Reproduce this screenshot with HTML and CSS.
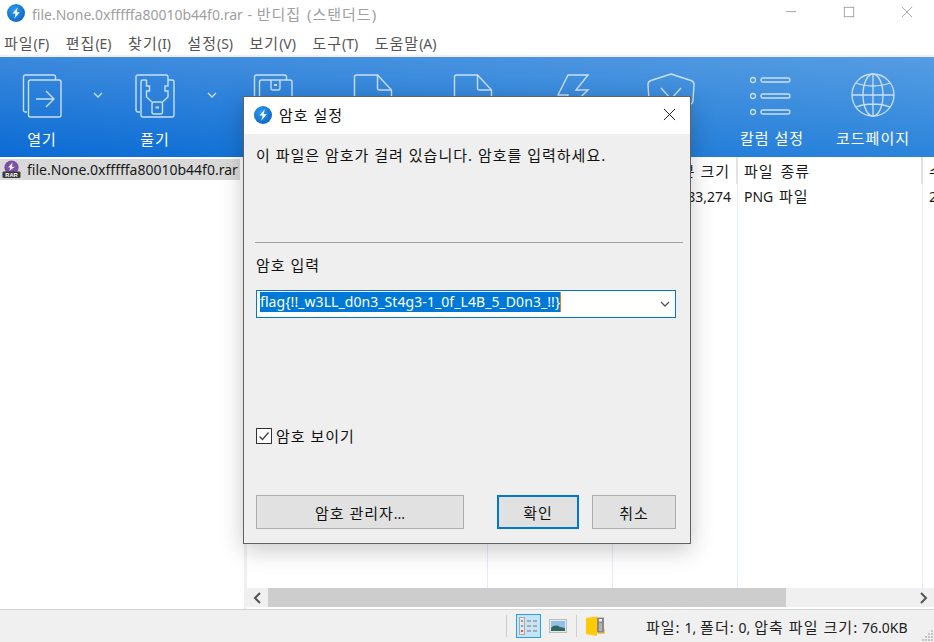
FILE: index.html
```html
<!DOCTYPE html>
<html lang="ko">
<head>
<meta charset="utf-8">
<title>반디집</title>
<link rel="stylesheet" href="styles.css">
</head>
<body>
<svg class="defs" width="0" height="0" aria-hidden="true">
  <defs>
    <radialGradient id="logoFill" cx="0.4" cy="0.35" r="0.75">
      <stop offset="0" stop-color="#2e9bee"/>
      <stop offset="1" stop-color="#0a62c4"/>
    </radialGradient>
    <symbol id="logo" viewBox="0 0 18 18">
      <circle cx="9" cy="9" r="9" fill="url(#logoFill)"/>
      <path d="M10.800 3.200 5.600 9.600h3l-1.300 5.200 5.400-6.600H9.600z" fill="#fff"/>
    </symbol>
    <symbol id="chev" viewBox="0 0 10 6">
      <path d="M1 1l4 4 4-4" fill="none" stroke="currentColor" stroke-width="1.300"/>
    </symbol>
    <symbol id="doc" viewBox="0 0 40 46">
      <path d="M1.500 4a2 2 0 0 1 2-2h21l14 15v25a2 2 0 0 1-2 2h-33a2 2 0 0 1-2-2z" fill="none" stroke="currentColor" stroke-width="1.400"/>
      <path d="M24.500 2v13a2 2 0 0 0 2 2h12" fill="none" stroke="currentColor" stroke-width="1.400"/>
    </symbol>
  </defs>
</svg>

<div class="app">
  <header class="titlebar">
    <svg class="logo"><use href="#logo"/></svg>
    <span class="title-text">file.None.0xfffffa80010b44f0.rar - <span class="ko">반디집 (스탠더드)</span></span>
    <div class="winbtns">
      <svg class="winbtn" viewBox="0 0 14 14"><path d="M1 6.500h12" stroke="#999" fill="none"/></svg>
      <svg class="winbtn" viewBox="0 0 14 14"><rect x="1.500" y="1.500" width="11" height="11" stroke="#999" fill="none"/></svg>
      <svg class="winbtn" viewBox="0 0 14 14"><path d="M1 1l12 12M13 1 1 13" stroke="#999" fill="none"/></svg>
    </div>
  </header>

  <nav class="menubar">
    <span><span class="ko">파일</span>(F)</span><span><span class="ko">편집</span>(E)</span><span><span class="ko">찾기</span>(I)</span><span><span class="ko">설정</span>(S)</span><span><span class="ko">보기</span>(V)</span><span><span class="ko">도구</span>(T)</span><span><span class="ko">도움말</span>(A)</span>
  </nav>

  <section class="toolbar">
    <div class="tool">
      <svg class="tool-icon" viewBox="0 0 40 46">
        <path d="M5 39H3.500a2 2 0 0 1-2-2V4a2 2 0 0 1 2-2h28a2 2 0 0 1 2 2v3" fill="none" stroke="currentColor" stroke-width="1.400"/>
        <rect x="6.500" y="7" width="32.500" height="37" rx="2" fill="none" stroke="currentColor" stroke-width="1.400"/>
        <path d="M14 26h17M24 18l8 8-8 8" fill="none" stroke="currentColor" stroke-width="1.400"/>
      </svg>
      <span class="tool-label ko">열기</span>
    </div>
    <svg class="tool-chev"><use href="#chev"/></svg>
    <div class="tool">
      <svg class="tool-icon" viewBox="0 0 40 46">
        <path d="M5 39H3a2 2 0 0 1-2-2V4a2 2 0 0 1 2-2h28a2 2 0 0 1 2 2v3" fill="none" stroke="currentColor" stroke-width="1.400"/>
        <path d="M11.500 7H8a2 2 0 0 0-2 2v33a2 2 0 0 0 2 2h29a2 2 0 0 0 2-2V9a2 2 0 0 0-2-2h-4" fill="none" stroke="currentColor" stroke-width="1.400"/>
        <path d="M11.500 7v6h3v5h-3v6l5.500 5M33 7v6h-3v5h3v6l-5.500 5" fill="none" stroke="currentColor" stroke-width="1.400"/>
        <rect x="17" y="29" width="10.500" height="12" rx="2" fill="none" stroke="currentColor" stroke-width="1.400"/>
        <rect x="20.500" y="33.500" width="3.500" height="2" fill="currentColor"/>
      </svg>
      <span class="tool-label ko">풀기</span>
    </div>
    <svg class="tool-chev"><use href="#chev"/></svg>
    <div class="tool">
      <svg class="tool-icon" viewBox="0 0 40 46">
        <path d="M5 39H3.500a2 2 0 0 1-2-2V4a2 2 0 0 1 2-2h28a2 2 0 0 1 2 2v3" fill="none" stroke="currentColor" stroke-width="1.400"/>
        <rect x="6.500" y="7" width="32.500" height="37" rx="2" fill="none" stroke="currentColor" stroke-width="1.400"/>
        <path d="M18 7v8a2 2 0 0 0 2 2h5a2 2 0 0 0 2-2V7" fill="none" stroke="currentColor" stroke-width="1.400"/>
        <rect x="21" y="11" width="3" height="2" fill="currentColor"/>
      </svg>
    </div>
    <div class="tool"><svg class="tool-icon"><use href="#doc"/></svg></div>
    <div class="tool"><svg class="tool-icon"><use href="#doc"/></svg></div>
    <div class="tool">
      <svg class="tool-icon" viewBox="0 0 40 46">
        <path d="M16 2H36L24 17H36L8 44l8-22H6z" fill="none" stroke="currentColor" stroke-width="1.400"/>
      </svg>
    </div>
    <div class="tool">
      <svg class="tool-icon shield" viewBox="0 0 50 46">
        <path d="M25 1 45 7.500c2 .7 3 2 3 4l-1 16c0 2-1 3-2.500 4L25 45 5.500 31.500C4 30.500 3 29.500 3 27.500l-1-16c0-2 1-3.300 3-4z" fill="none" stroke="currentColor" stroke-width="1.400"/>
        <path d="M15 15l10 11 10-11" fill="none" stroke="currentColor" stroke-width="1.400"/>
      </svg>
    </div>
    <div class="tool">
      <svg class="tool-icon" viewBox="0 0 44 44">
        <circle cx="3" cy="7" r="2.500" fill="none" stroke="currentColor" stroke-width="1.300"/>
        <circle cx="3" cy="23" r="2.500" fill="none" stroke="currentColor" stroke-width="1.300"/>
        <circle cx="3" cy="39" r="2.500" fill="none" stroke="currentColor" stroke-width="1.300"/>
        <rect x="11" y="5" width="29" height="4" rx="2" fill="none" stroke="currentColor" stroke-width="1.300"/>
        <rect x="11" y="21" width="29" height="4" rx="2" fill="none" stroke="currentColor" stroke-width="1.300"/>
        <rect x="11" y="37" width="29" height="4" rx="2" fill="none" stroke="currentColor" stroke-width="1.300"/>
      </svg>
      <span class="tool-label ko">칼럼 설정</span>
    </div>
    <div class="tool">
      <svg class="tool-icon globe" viewBox="0 0 44 44">
        <circle cx="22" cy="22" r="21" fill="none" stroke="currentColor" stroke-width="1.300"/>
        <ellipse cx="22" cy="22" rx="10" ry="21" fill="none" stroke="currentColor" stroke-width="1.300"/>
        <path d="M22 1v42M1 22h42M5 10c10 4 24 4 34 0M5 34c10-4 24-4 34 0" fill="none" stroke="currentColor" stroke-width="1.300"/>
      </svg>
      <span class="tool-label ko">코드페이지</span>
    </div>
  </section>

  <main class="content">
    <aside class="tree">
      <div class="tree-row">
        <svg class="rar-icon" viewBox="0 0 20 20">
          <circle cx="10" cy="8" r="7.500" fill="#7d4ea8"/>
          <path d="M11 2.500 6.500 8H9L7.500 11.500 13.500 7H10.500z" fill="#fff"/>
          <rect x="0.500" y="12" width="19" height="7" rx="1.500" fill="#3a3a3a"/>
          <text x="10" y="18" class="rar-text" text-anchor="middle">RAR</text>
        </svg>
        <span>file.None.0xfffffa80010b44f0.rar</span>
      </div>
    </aside>
    <div class="splitter"></div>
    <div class="listpane">
      <div class="columns">
        <div class="col col-a"><div class="cell head"></div></div>
        <div class="col col-b"><div class="cell head"></div></div>
        <div class="col col-c"><div class="cell head right ko">본 크기</div><div class="cell right">83,274</div></div>
        <div class="col col-d"><div class="cell head ko">파일 종류</div><div class="cell">PNG <span class="ko">파일</span></div></div>
        <div class="col col-e"><div class="cell head ko">수</div><div class="cell">2</div></div>
      </div>
      <div class="hscroll">
        <svg class="scroll-arrow" viewBox="0 0 8 12"><path d="M6.500 1 1.500 6l5 5" fill="none" stroke="#555" stroke-width="2"/></svg>
        <div class="scroll-track"><div class="scroll-thumb"></div></div>
        <svg class="scroll-arrow" viewBox="0 0 8 12"><path d="M1.500 1l5 5-5 5" fill="none" stroke="#555" stroke-width="2"/></svg>
      </div>
    </div>
  </main>

  <footer class="statusbar">
    <span class="vsep"></span>
    <span class="viewbtn active">
      <svg width="21" height="20" viewBox="0 0 21 20">
        <rect x="1.500" y="1.500" width="5" height="17" fill="#e8e8e8" stroke="#aaa"/>
        <rect x="3" y="4" width="2" height="2" fill="#999"/>
        <rect x="3" y="9" width="2" height="2" fill="#6aa5d8"/>
        <rect x="3" y="14" width="2" height="2" fill="#d9534f"/>
        <path d="M9 5h4M15 5h4M9 10h4M15 10h4M9 15h4M15 15h4" stroke="#777" stroke-width="1.200"/>
      </svg>
    </span>
    <span class="viewbtn">
      <svg width="18" height="14" viewBox="0 0 18 14">
        <rect x="0.500" y="0.500" width="17" height="13" fill="#e9e9e9" stroke="#bdbdbd"/>
        <rect x="2" y="2" width="14" height="10" fill="#8fc1ea"/>
        <path d="M2 9c3-3 6-3 9-1l5 1v3H2z" fill="#2f6a5e"/>
      </svg>
    </span>
    <span class="vsep second"></span>
    <svg class="folder-icon" width="21" height="20" viewBox="0 0 21 20">
      <path d="M13 13h7v5h-7z" fill="#f2c75c"/>
      <path d="M1 2 12 0.500V20L1 18z" fill="#ffcb05"/>
      <rect x="12" y="1.500" width="7" height="15" fill="#8a8a8a"/>
      <rect x="14" y="3" width="3" height="2.500" fill="#eee"/>
      <path d="M14 8h3M14 10h3M14 12h3M14 14h3" stroke="#ddd"/>
    </svg>
    <span class="status-text"><span class="ko">파일:</span> 1, <span class="ko">폴더:</span> 0, <span class="ko">압축 파일 크기:</span> 76.0KB</span>
    <svg class="grip" width="12" height="12" viewBox="0 0 12 12">
      <path d="M9 1h2v2H9zM6 4h2v2H6zM9 4h2v2H9zM3 7h2v2H3zM6 7h2v2H6zM9 7h2v2H9zM0 10h2v2H0zM3 10h2v2H3zM6 10h2v2H6zM9 10h2v2H9z" fill="#c4c4c4"/>
    </svg>
  </footer>
</div>

<div class="dialog">
  <div class="dlg-title">
    <svg class="logo"><use href="#logo"/></svg>
    <span class="dlg-title-text ko">암호 설정</span>
    <svg class="dlg-close" viewBox="0 0 14 14"><path d="M1 1l12 12M13 1 1 13" stroke="#111" fill="none"/></svg>
  </div>
  <div class="dlg-body">
    <p class="dlg-msg ko">이 파일은 암호가 걸려 있습니다. 암호를 입력하세요.</p>
    <hr class="dlg-sep">
    <div class="dlg-label ko">암호 입력</div>
    <div class="combo">
      <span class="combo-text">flag{!!_w3LL_d0n3_St4g3-1_0f_L4B_5_D0n3_!!}</span>
      <svg class="combo-chev"><use href="#chev"/></svg>
    </div>
    <label class="check">
      <span class="check-box">
        <svg width="14" height="14" viewBox="0 0 14 14"><path d="M2.500 7.500 5.500 10.500 11.500 3.500" fill="none" stroke="#444" stroke-width="1.400"/></svg>
      </span>
      <span class="ko">암호 보이기</span>
    </label>
    <div class="dlg-actions">
      <button class="btn btn-wide" type="button"><span class="ko">암호 관리자</span>...</button>
      <button class="btn btn-primary ko" type="button">확인</button>
      <button class="btn btn-cancel ko" type="button">취소</button>
    </div>
  </div>
</div>
</body>
</html>
```

FILE: styles.css
```css
* { box-sizing: border-box; }

html, body {
  margin: 0;
  padding: 0;
  width: 934px;
  height: 642px;
  overflow: hidden;
  background: #fff;
  font-family: "Noto Sans", "Noto Sans CJK KR", sans-serif;
  font-size: 14px;
  color: #1a1a1a;
}

body { position: relative; }

.defs { position: absolute; }

/* Hangul runs are set larger and looser than the Latin text beside them */
.ko { font-size: 15px; letter-spacing: 1px; }

.app {
  display: flex;
  flex-direction: column;
  height: 642px;
}

/* title bar */
.titlebar {
  display: flex;
  align-items: center;
  height: 26px;
  padding-left: 7px;
  flex: none;
}

.logo { width: 18px; height: 18px; flex: none; }

.title-text {
  margin-left: 7px;
  color: #a0a0a0;
  white-space: nowrap;
  word-spacing: 1px;
}

.winbtns {
  margin-left: auto;
  display: flex;
  gap: 46px;
  padding-right: 21px;
}

.winbtn { width: 12px; height: 12px; margin-top: -2px; }

/* menu */
.menubar {
  display: flex;
  gap: 16.500px;
  align-items: center;
  height: 31px;
  padding: 4px 0 0 4px;
  flex: none;
  color: #555;
  border-bottom: 2px solid #f0f0f0;
}

/* toolbar */
.toolbar {
  flex: none;
  height: 100px;
  display: grid;
  grid-template-columns: 84px 28px 86px 28px 94px 106px 94px 104px 94px 108px 94px;
  color: #c9e0f7;
  background:
    linear-gradient(to bottom, rgba(255, 255, 255, 0.2), rgba(255, 255, 255, 0)),
    linear-gradient(to right, #0a6bd4, #2b84db);
}

.tool {
  display: flex;
  flex-direction: column;
  align-items: center;
  padding-top: 16px;
}

.tool-icon { width: 40px; height: 46px; flex: none; }
.tool-icon.shield { width: 50px; }

.tool-label {
  margin-top: 10px;
  color: #fff;
  line-height: 20px;
  white-space: nowrap;
}

.tool:nth-last-child(-n+2) .tool-icon { height: 44px; width: 44px; }
.tool:nth-last-child(-n+2) .tool-label { margin-top: 11px; }

.tool-chev {
  width: 10px;
  height: 6px;
  margin: 35px 0 0 9px;
  color: #c9e0f7;
}

/* content */
.content {
  flex: 1;
  display: flex;
  min-height: 0;
}

.tree {
  width: 244px;
  flex: none;
  padding-top: 2px;
}

.tree-row {
  display: flex;
  align-items: center;
  gap: 6px;
  width: 240px;
  height: 21px;
  padding-left: 2px;
  background: #d9d9d9;
  white-space: nowrap;
}

.rar-icon { width: 19px; height: 19px; flex: none; }
.rar-text { font: bold 6px "Liberation Sans", sans-serif; fill: #fff; }

.splitter { width: 3px; flex: none; background: #f0f0f0; }

.listpane {
  flex: 1;
  min-width: 0;
  display: flex;
  flex-direction: column;
}

.columns {
  flex: 1;
  display: flex;
  min-height: 0;
  overflow: hidden;
}

.col { flex: none; border-right: 1px solid #e5edf8; }
.col-a { width: 241px; }
.col-b { width: 125px; }
.col-c { width: 125px; }
.col-d { width: 185px; }
.col-e { flex: 1; border-right: 0; }

.cell {
  height: 25px;
  line-height: 25px;
  padding: 0 6px;
  white-space: nowrap;
  word-spacing: 2px;
}

.cell.head {
  height: 27px;
  line-height: 29px;
  border-right: 2px solid #e3e3e3;
  margin-right: -1px;
}

.cell.right { text-align: right; word-spacing: 0; }

.hscroll {
  flex: none;
  height: 19px;
  margin-bottom: 2px;
  display: flex;
  align-items: center;
  background: #f0f0f0;
}

.scroll-arrow { width: 21px; height: 12px; flex: none; }
.scroll-track { flex: 1; height: 100%; }
.scroll-thumb { width: 518px; height: 100%; background: #cdcdcd; }

/* status bar */
.statusbar {
  flex: none;
  height: 33px;
  display: flex;
  align-items: center;
  background: #f0f0f0;
  border-top: 1px solid #d4d4d4;
  padding-left: 506px;
  position: relative;
}

.vsep { width: 1px; height: 22px; background: #cfcfcf; flex: none; }
.vsep.second { margin-left: 6px; }

.viewbtn {
  width: 25px;
  height: 24px;
  display: flex;
  align-items: center;
  justify-content: center;
  flex: none;
}

.viewbtn.active {
  background: #c6e4f5;
  border: 1px solid #27a0e6;
  margin: 0 4px 0 9px;
}

.folder-icon { margin-left: 8px; flex: none; }

.status-text {
  margin-left: 40px;
  white-space: nowrap;
  word-spacing: 0.2px;
  color: #222;
}

.grip { position: absolute; right: 0; bottom: 1px; }

/* dialog */
.dialog {
  position: absolute;
  left: 243px;
  top: 96px;
  width: 448px;
  height: 448px;
  background: #efefef;
  border: 1px solid #616161;
  box-shadow: 0 6px 22px rgba(0, 0, 0, 0.22);
  display: flex;
  flex-direction: column;
  color: #111;
}

.dlg-title {
  flex: none;
  height: 37px;
  padding: 0 0 2px 10px;
  background: #fff;
  display: flex;
  align-items: center;
}

.dlg-title-text { margin-left: 7px; }

.dlg-close { width: 13px; height: 13px; margin-left: auto; margin-right: 14px; }

.dlg-body {
  flex: 1;
  display: flex;
  flex-direction: column;
  padding: 0 14px 0 12px;
}

.dlg-msg {
  margin: 10px 0 0;
  line-height: 22px;
}

.dlg-sep {
  margin: 76px -7px 0 -1px;
  height: 1px;
  border: 0;
  background: #a0a0a0;
}

.dlg-label { margin-top: 11px; line-height: 22px; }

.combo {
  margin-top: 14px;
  height: 28px;
  background: #fff;
  border: 1px solid #0078d7;
  display: flex;
  align-items: center;
  padding-left: 3px;
}

.combo-text {
  background: #0078d7;
  color: #fff;
  height: 20px;
  line-height: 20px;
  margin-bottom: 4px;
  letter-spacing: 0.07px;
  white-space: nowrap;
  border-right: 1px solid #e07b2a;
}

.combo-chev { width: 10px; height: 6px; margin-left: auto; margin-right: 5px; color: #555; }

.check {
  margin-top: 108px;
  display: flex;
  align-items: center;
  gap: 4px;
  line-height: 20px;
}

.check-box {
  width: 16px;
  height: 16px;
  border: 1px solid #333;
  background: #fff;
  display: flex;
  align-items: center;
  justify-content: center;
  flex: none;
}

.dlg-actions {
  margin-top: 49px;
  display: flex;
}

.btn {
  height: 34px;
  padding: 0;
  background: #e1e1e1;
  border: 1px solid #adadad;
  font-family: inherit;
  font-size: 14px;
  color: #111;
}

.btn.ko { font-size: 15px; }

.btn-wide { width: 208px; margin-right: 33px; }
.btn-primary { width: 82px; margin-right: 13px; border: 2px solid #0078d7; }
.btn-cancel { width: 84px; }
```
